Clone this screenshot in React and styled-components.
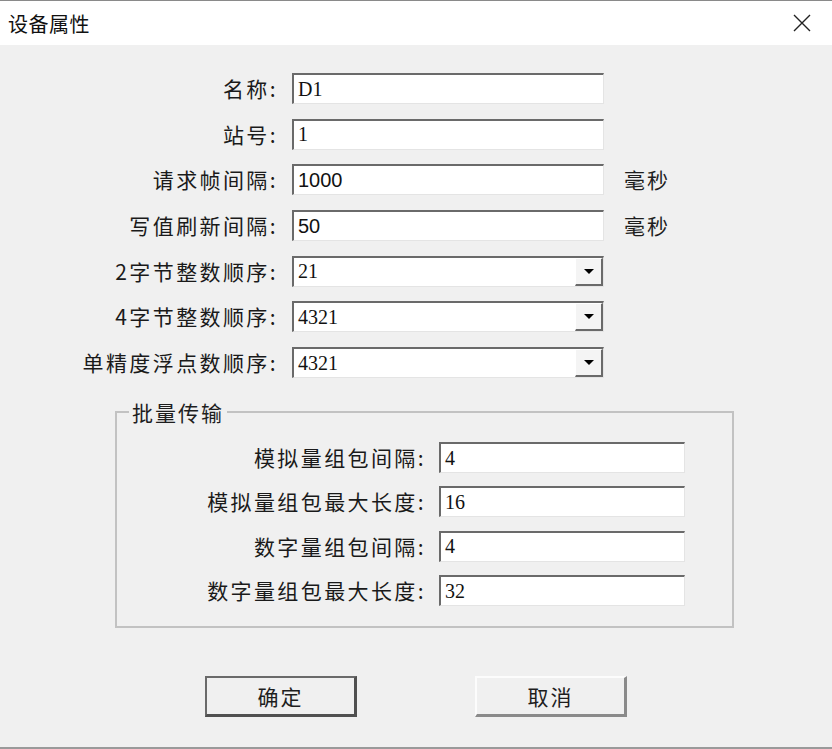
import React from 'react'
import styled, { createGlobalStyle } from 'styled-components'

const GlobalStyle = createGlobalStyle`
  html, body {
    margin: 0;
    padding: 0;
    background: #f0f0f0;
  }
`

const cjk = `"Noto Sans CJK SC", "Noto Sans", sans-serif`

const Window = styled.div`
  width: 832px;
  height: 749px;
  box-sizing: border-box;
  background: #f0f0f0;
  border-top: 1px solid #8a8a8a;
  border-bottom: 2px solid #9a9a9a;
  display: flex;
  flex-direction: column;
  overflow: hidden;
  font-family: ${cjk};
  color: #1e1e1e;
`

const TitleBar = styled.div`
  height: 44px;
  background: #fff;
  display: flex;
  align-items: center;
  justify-content: space-between;
  padding: 0 20px 0 8px;
`

const Title = styled.div`
  font-size: 20px;
  color: #111;
  letter-spacing: 0.5px;
`

const Close = styled.svg`
  width: 20px;
  height: 20px;
`

const FormGrid = styled.div`
  display: grid;
  grid-template-columns: 278px 312px 60px;
  column-gap: 14px;
  row-gap: 14.7px;
  margin-top: 28px;
`

const Label = styled.div`
  font-size: 21px;
  line-height: 31px;
  letter-spacing: 2.4px;
  text-align: right;
  white-space: nowrap;
  color: #1a1a1a;
`

const Unit = styled.div`
  font-size: 21px;
  line-height: 31px;
  letter-spacing: 2px;
  padding-left: 6px;
`

const Field = styled.div`
  height: 31px;
  box-sizing: border-box;
  background: #fff;
  border-top: 2px solid #6a6a6a;
  border-left: 2px solid #6a6a6a;
  border-right: 1px solid #e4e4e4;
  border-bottom: 1px solid #e4e4e4;
  display: flex;
  align-items: stretch;
  font-family: ${p => (p.$serif ? '"Liberation Serif", serif' : '"Liberation Sans", sans-serif')};
  font-size: 20px;
  color: #111;
`

const Value = styled.span`
  flex: 1;
  display: flex;
  align-items: center;
  padding-left: 4px;
`

const DropBtn = styled.div`
  width: 28px;
  box-sizing: border-box;
  background: #f4f4f4;
  border-top: 1px solid #fff;
  border-left: 1px solid #fff;
  border-right: 2px solid #6a6a6a;
  border-bottom: 2px solid #6a6a6a;
  display: flex;
  align-items: center;
  justify-content: center;

  &::after {
    content: '';
    border-left: 5px solid transparent;
    border-right: 5px solid transparent;
    border-top: 5px solid #000;
  }
`

const Group = styled.fieldset`
  margin: 22px 0 0 115px;
  width: 619px;
  box-sizing: border-box;
  min-inline-size: 0;
  border: 2px solid #c2c2c2;
  padding: 18px 0 20px 0;
`

const Legend = styled.legend`
  margin-left: 12px;
  padding: 0 3px;
  font-size: 21px;
  line-height: 24px;
  letter-spacing: 2px;
`

const GroupGrid = styled.div`
  display: grid;
  grid-template-columns: 309px 246px;
  column-gap: 13px;
  row-gap: 13.3px;
`

const Buttons = styled.div`
  display: flex;
  gap: 118px;
  margin: 48px 0 0 205px;
`

const Button = styled.div`
  width: 152px;
  height: 41px;
  box-sizing: border-box;
  background: #f0f0f0;
  display: flex;
  align-items: center;
  justify-content: center;
  font-size: 21px;
  letter-spacing: 2px;
  border-top: 2px solid ${p => (p.$default ? '#6a6a6a' : '#fcfcfc')};
  border-left: 2px solid ${p => (p.$default ? '#6a6a6a' : '#fcfcfc')};
  border-right: 3px solid ${p => (p.$default ? '#505050' : '#8a8a8a')};
  border-bottom: 3px solid ${p => (p.$default ? '#505050' : '#8a8a8a')};
`

const mainRows = [
  { label: '名称:', value: 'D1', serif: true },
  { label: '站号:', value: '1', serif: true },
  { label: '请求帧间隔:', value: '1000', unit: '毫秒' },
  { label: '写值刷新间隔:', value: '50', unit: '毫秒' },
  { label: '2字节整数顺序:', value: '21', serif: true, combo: true },
  { label: '4字节整数顺序:', value: '4321', serif: true, combo: true },
  { label: '单精度浮点数顺序:', value: '4321', serif: true, combo: true },
]

const batchRows = [
  { label: '模拟量组包间隔:', value: '4' },
  { label: '模拟量组包最大长度:', value: '16' },
  { label: '数字量组包间隔:', value: '4' },
  { label: '数字量组包最大长度:', value: '32' },
]

export default function App() {
  return (
    <Window>
      <GlobalStyle />
      <TitleBar>
        <Title>设备属性</Title>
        <Close viewBox="0 0 20 20">
          <path d="M2 2 L18 18 M18 2 L2 18" stroke="#222" strokeWidth="1.4" fill="none" />
        </Close>
      </TitleBar>

      <FormGrid>
        {mainRows.map(row => (
          <React.Fragment key={row.label}>
            <Label>{row.label}</Label>
            <Field $serif={row.serif}>
              <Value>{row.value}</Value>
              {row.combo && <DropBtn />}
            </Field>
            <Unit>{row.unit}</Unit>
          </React.Fragment>
        ))}
      </FormGrid>

      <Group>
        <Legend>批量传输</Legend>
        <GroupGrid>
          {batchRows.map(row => (
            <React.Fragment key={row.label}>
              <Label>{row.label}</Label>
              <Field $serif>
                <Value>{row.value}</Value>
              </Field>
            </React.Fragment>
          ))}
        </GroupGrid>
      </Group>

      <Buttons>
        <Button $default>确定</Button>
        <Button>取消</Button>
      </Buttons>
    </Window>
  )
}
